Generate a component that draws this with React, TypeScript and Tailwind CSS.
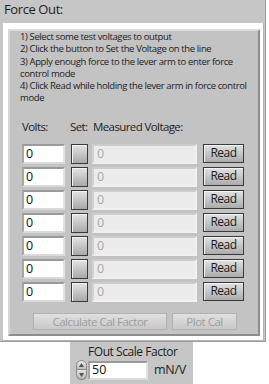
const rows = [0, 1, 2, 3, 4, 5, 6];

function SetButton() {
  return (
    <div className="w-[17px] h-[20px] border border-[#3a3a3a] bg-gradient-to-b from-[#e4e4e4] to-[#a9a9a9] shadow-[inset_1px_1px_0_#f4f4f4]" />
  );
}

function ReadButton() {
  return (
    <div className="w-[41px] h-[19px] border border-[#3a3a3a] bg-gradient-to-b from-[#e2e2e2] to-[#acacac] shadow-[inset_1px_1px_0_#f4f4f4] flex items-center justify-center text-[12px] tracking-[-0.5px] leading-none text-[#1a1a1a]">
      Read
    </div>
  );
}

export default function App() {
  return (
    <div className="w-[269px] h-[384px] bg-white font-['Open_Sans',sans-serif] text-[#1e1e1e]">
      <div className="w-[266px] h-[342px] bg-[#c6c6c6] border-r border-b border-[#9c9c9c] flex flex-col">
        <div className="pl-[4px] pt-[1px] h-[23px] text-[13px] tracking-[-0.4px] leading-[17px]">Force Out:</div>
        <div className="ml-[3px] mr-[1px] flex-1 bg-white border-r border-b border-[#b4b4b4] pt-[6px] pl-[5px] pr-[3px] pb-[4px]">
          <div className="h-full bg-[#c3c3c3] border-2 border-t-[#dddddd] border-l-[#d6d6d6] border-r-[#8e8e8e] border-b-[#8e8e8e] flex flex-col">
            <div className="ml-[10px] w-[236px] text-[9.5px] tracking-[-0.38px] leading-[12.3px] text-[#222]">
              <p>1) Select some test voltages to output</p>
              <p>2) Click the button to Set the Voltage on the line</p>
              <p>3) Apply enough force to the lever arm to enter force control mode</p>
              <p>4) Click Read while holding the lever arm in force control mode</p>
            </div>
            <div className="flex items-center h-[17px] mt-[13px] pl-[12px] text-[11.5px] tracking-[-0.6px] leading-none">
              <span className="w-[48px]">Volts:</span>
              <span className="w-[23px]">Set:</span>
              <span>Measured Voltage:</span>
            </div>
            <div className="mt-[9px] pl-[12px] flex flex-col gap-[3px]">
              {rows.map((r) => (
                <div key={r} className="flex items-start h-[20px]">
                  <div className="w-[43px] h-[20px] bg-white border-2 border-t-[#9a9a9a] border-l-[#a6a6a6] border-r-[#e2e2e2] border-b-[#dadada] flex items-center pl-[2px] text-[12.5px] leading-none text-[#111]">
                    0
                  </div>
                  <div className="ml-[6px]">
                    <SetButton />
                  </div>
                  <div className="ml-[4px] w-[105px] h-[20px] bg-[#ececec] border-2 border-t-[#cdcdcd] border-l-[#d2d2d2] border-r-[#f2f2f2] border-b-[#f0f0f0] flex items-center pl-[3px] text-[12.5px] leading-none text-[#a9a9a9]">
                    0
                  </div>
                  <div className="ml-[6px]">
                    <ReadButton />
                  </div>
                </div>
              ))}
            </div>
            <div className="mt-[11px] flex pl-[23px] gap-[5px]">
              <div className="w-[134px] h-[17px] border border-[#b2b2b2] bg-gradient-to-b from-[#e0e0e0] to-[#c9c9c9] flex items-center justify-center text-[11.5px] tracking-[-0.5px] leading-none text-[#9d9d9d]">
                Calculate Cal Factor
              </div>
              <div className="w-[65px] h-[17px] border border-[#b2b2b2] bg-gradient-to-b from-[#e0e0e0] to-[#c9c9c9] flex items-center justify-center text-[11.5px] tracking-[-0.5px] leading-none text-[#9d9d9d]">
                Plot Cal
              </div>
            </div>
          </div>
        </div>
      </div>
      <div className="ml-[70px] w-[123px] h-[42px] bg-[#c6c6c6] flex flex-col">
        <div className="pl-[18px] pt-[1px] h-[18px] text-[12px] tracking-[-0.45px] leading-[17px]">FOut Scale Factor</div>
        <div className="flex items-center pl-[6px]">
          <div className="w-[11px] h-[20px] flex flex-col">
            <div className="h-[10px] rounded-t-full border border-[#8a8a8a] bg-gradient-to-b from-[#eeeeee] to-[#bdbdbd] flex items-center justify-center">
              <svg width="5" height="4" viewBox="0 0 5 4"><path d="M2.5 0 L5 4 L0 4 Z" fill="#555" /></svg>
            </div>
            <div className="h-[10px] rounded-b-full border border-t-0 border-[#8a8a8a] bg-gradient-to-b from-[#e6e6e6] to-[#b5b5b5] flex items-center justify-center">
              <svg width="5" height="4" viewBox="0 0 5 4"><path d="M0 0 L5 0 L2.5 4 Z" fill="#555" /></svg>
            </div>
          </div>
          <div className="ml-[1px] w-[60px] h-[19px] bg-white border-2 border-t-[#9a9a9a] border-l-[#a6a6a6] border-r-[#e2e2e2] border-b-[#dadada] flex items-center pl-[2px] text-[12.5px] leading-none text-[#111]">
            50
          </div>
          <span className="ml-[6px] text-[12.5px] tracking-[-0.3px] leading-none">mN/V</span>
        </div>
      </div>
    </div>
  );
}
